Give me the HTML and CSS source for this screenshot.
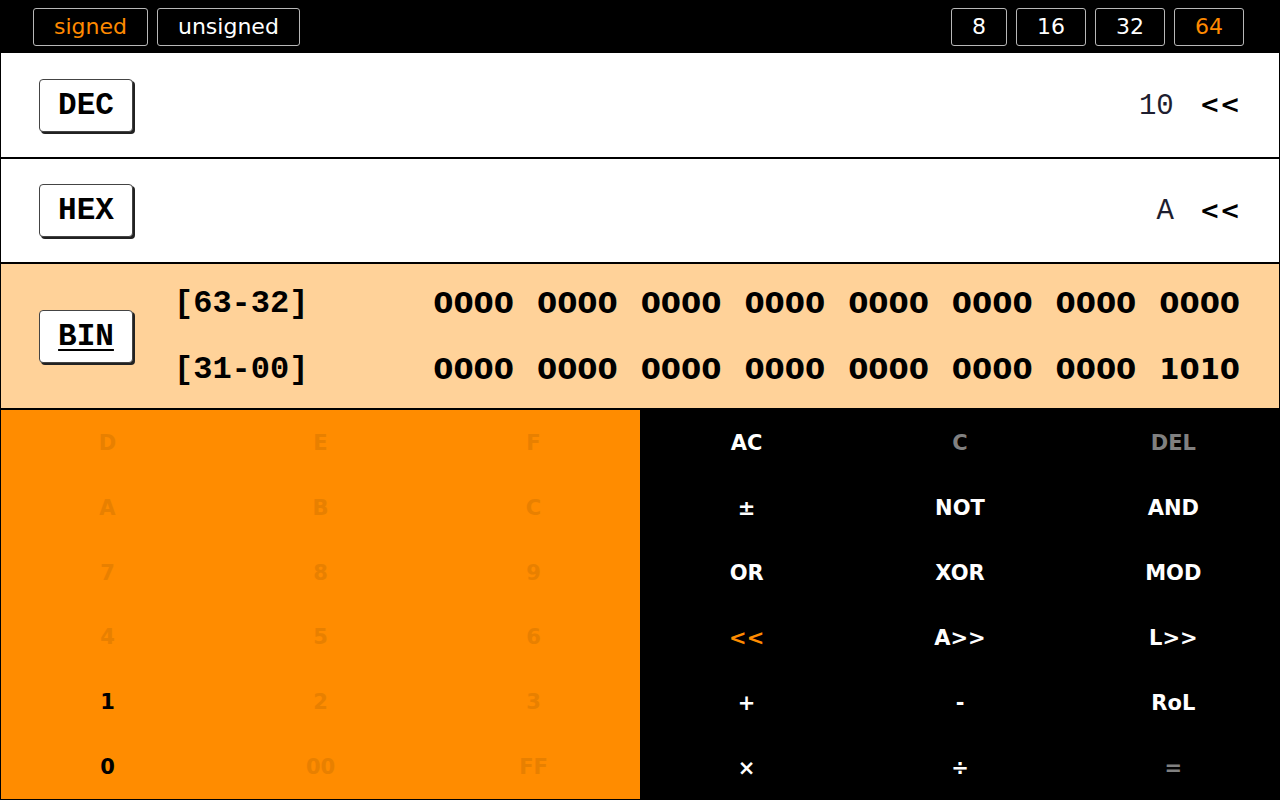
FILE: index.html
```html
<!DOCTYPE html>
<html>
<head>
<meta charset="utf-8">
<link rel="stylesheet" href="styles.css">
</head>
<body>
<div class="app">
  <div class="topbar">
    <div class="group">
      <button class="tb active">signed</button>
      <button class="tb">unsigned</button>
    </div>
    <div class="group sizes">
      <button class="tb">8</button>
      <button class="tb">16</button>
      <button class="tb">32</button>
      <button class="tb active">64</button>
    </div>
  </div>
  <div class="display">
    <div class="row row-dec">
      <span class="label">DEC</span>
      <span class="value">10</span>
      <span class="shift">&lt;&lt;</span>
    </div>
    <div class="row row-hex">
      <span class="label">HEX</span>
      <span class="value">A</span>
      <span class="shift">&lt;&lt;</span>
    </div>
    <div class="row row-bin">
      <span class="label current">BIN</span>
      <div class="bits">
        <div class="bitline">
          <span class="range">[63-32]</span>
          <div class="nibbles">
            <span>0000</span><span>0000</span><span>0000</span><span>0000</span><span>0000</span><span>0000</span><span>0000</span><span>0000</span>
          </div>
        </div>
        <div class="bitline">
          <span class="range">[31-00]</span>
          <div class="nibbles">
            <span>0000</span><span>0000</span><span>0000</span><span>0000</span><span>0000</span><span>0000</span><span>0000</span><span>1010</span>
          </div>
        </div>
      </div>
    </div>
  </div>
  <div class="keypad">
    <div class="pad digits">
      <span class="key off">D</span><span class="key off">E</span><span class="key off">F</span>
      <span class="key off">A</span><span class="key off">B</span><span class="key off">C</span>
      <span class="key off">7</span><span class="key off">8</span><span class="key off">9</span>
      <span class="key off">4</span><span class="key off">5</span><span class="key off">6</span>
      <span class="key">1</span><span class="key off">2</span><span class="key off">3</span>
      <span class="key">0</span><span class="key off">00</span><span class="key off">FF</span>
    </div>
    <div class="pad ops">
      <span class="key">AC</span><span class="key off">C</span><span class="key off">DEL</span>
      <span class="key">±</span><span class="key">NOT</span><span class="key">AND</span>
      <span class="key">OR</span><span class="key">XOR</span><span class="key">MOD</span>
      <span class="key active">&lt;&lt;</span><span class="key">A&gt;&gt;</span><span class="key">L&gt;&gt;</span>
      <span class="key">+</span><span class="key">-</span><span class="key">RoL</span>
      <span class="key">×</span><span class="key">÷</span><span class="key off">=</span>
    </div>
  </div>
</div>
</body>
</html>
```

FILE: styles.css
```css
html, body {
  margin: 0;
  padding: 0;
  background: #000;
}

.app {
  width: 1280px;
  height: 800px;
  overflow: hidden;
  display: flex;
  flex-direction: column;
}

.topbar {
  height: 53px;
  flex: none;
  background: #000;
  display: flex;
  justify-content: space-between;
  align-items: center;
  padding: 0 36px 0 33px;
  box-sizing: border-box;
}

.group {
  display: flex;
  gap: 9px;
}

.group.sizes {
  gap: 9px;
}

.tb {
  height: 38px;
  padding: 0 20px;
  background: #000;
  color: #fff;
  border: 1px solid #b8b8b8;
  border-radius: 3px;
  font-family: "DejaVu Sans", Verdana, sans-serif;
  font-size: 22px;
  line-height: 1;
  cursor: pointer;
}

.tb.active {
  color: #ff8a00;
}

.display {
  flex: none;
  border-left: 1px solid #000;
  border-right: 1px solid #000;
  background: #fff;
}

.row {
  display: flex;
  align-items: center;
  padding: 0 39px 0 38px;
  border-bottom: 2px solid #000;
  background: #fff;
}

.row-dec { height: 104px; }
.row-hex { height: 103px; }
.row-bin {
  height: 144px;
  background: #ffd299;
}

.label {
  width: 92px;
  height: 51px;
  flex: none;
  display: flex;
  align-items: center;
  justify-content: center;
  background: #fff;
  border: 1px solid #444;
  border-radius: 4px;
  box-shadow: 2px 2px 0 #222;
  font-family: "Liberation Mono", "Courier New", monospace;
  font-weight: bold;
  font-size: 31px;
  color: #000;
}

.label.current {
  text-decoration: underline;
  text-underline-offset: 4px;
  text-decoration-thickness: 2px;
}

.value {
  margin-left: auto;
  font-family: "Liberation Mono", "Courier New", monospace;
  font-size: 29px;
  color: #1e1e30;
  margin-top: 2px;
}

.shift {
  margin-left: 26px;
  font-family: "DejaVu Sans", Verdana, sans-serif;
  font-weight: bold;
  font-size: 24px;
  color: #000;
}

.bits {
  flex: 1;
  display: flex;
  flex-direction: column;
  margin-left: 41px;
}

.bitline {
  height: 66px;
  display: flex;
  align-items: center;
}

.range {
  font-family: "Liberation Mono", "Courier New", monospace;
  font-weight: bold;
  font-size: 32px;
  color: #000;
}

.nibbles {
  margin-left: auto;
  display: flex;
  gap: 23px;
  font-family: "DejaVu Sans", Verdana, sans-serif;
  font-weight: bold;
  font-size: 29px;
  color: #000;
}

.keypad {
  flex: 1;
  display: grid;
  grid-template-columns: 1fr 1fr;
}

.pad {
  display: grid;
  grid-template-columns: repeat(3, 1fr);
  grid-template-rows: repeat(6, 1fr);
  font-family: "DejaVu Sans", Verdana, sans-serif;
  font-weight: bold;
  font-size: 21px;
}

.digits {
  background: #ff8c00;
  border-left: 1px solid #000;
  border-bottom: 1px solid #000;
  color: #000;
}

.ops {
  background: #000;
  color: #fff;
}

.key {
  display: flex;
  align-items: center;
  justify-content: center;
  padding-top: 1px;
}

.digits .key.off { color: #e88000; }
.ops .key.off { color: #808080; }
.ops .key.active { color: #ff8c00; }
```
